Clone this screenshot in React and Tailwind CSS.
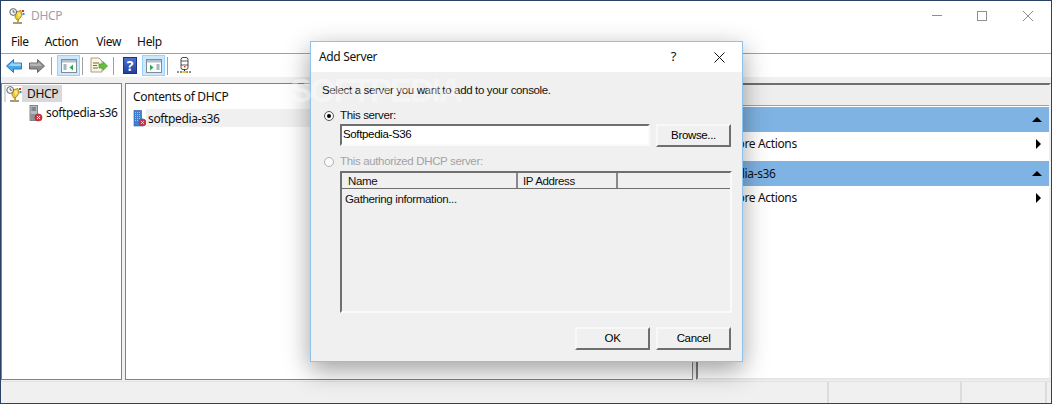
const ui = { fontFamily: '"Noto Sans", "Open Sans", sans-serif' };

const DhcpIcon = () => (
    <svg width="16" height="16" viewBox="0 0 16 16">
        <path d="M6 4l6-1.500 1 5-3 4H7.500L6 9z" fill="#efc72e" stroke="#8f6f10" strokeWidth="0.7" />
        <path d="M8 5l3-.7.500 3-2 2.500z" fill="#f9e680" />
        <circle cx="4.200" cy="4" r="3.400" fill="#f4f4f4" stroke="#555" strokeWidth="0.9" />
        <path d="M4.200 2v2.200h2" fill="none" stroke="#333" strokeWidth="0.7" />
        <rect x="13" y="2" width="2" height="2" fill="#d83a2a" />
        <rect x="13.500" y="5" width="2" height="2" fill="#3a8ad8" />
        <path d="M8.300 12h1.500v2H8.300z" fill="#a98a20" />
        <path d="M4 15h9" stroke="#6b5a20" strokeWidth="1.200" />
    </svg>
);

const ServerIcon = () => (
    <svg width="14" height="17" viewBox="0 0 14 17">
        <rect x="1" y="0.500" width="7.500" height="15" fill="#b8bcc2" stroke="#6a6f76" strokeWidth="0.8" />
        <path d="M2.500 3h4.500M2.500 5h4.500" stroke="#4d5258" strokeWidth="1" />
        <rect x="1.500" y="9" width="6.500" height="6" fill="#8e9298" />
        <circle cx="9.500" cy="12.500" r="3.600" fill="#d2333f" stroke="#8e1b25" strokeWidth="0.5" />
        <path d="M8 11l3 3M11 11l-3 3" stroke="#fff" strokeWidth="1" />
    </svg>
);

const ServerBlueIcon = () => (
    <svg className="-mr-[1px]" width="14" height="17" viewBox="0 0 14 17">
        <rect x="1" y="0.500" width="7.500" height="15.500" fill="#3f7fd0" stroke="#2c5ea8" strokeWidth="0.6" />
        <path d="M2 2.500h5.500M2 4.500h5.500M2 6.500h5.500M2 8.500h5.500M2 10.500h5.500" stroke="#a8c8ee" strokeWidth="0.9" strokeDasharray="1 1" />
        <circle cx="9.500" cy="12.500" r="3.600" fill="#c8324a" stroke="#3f5fb0" strokeWidth="0.8" />
        <path d="M8 11l3 3M11 11l-3 3" stroke="#e8d0e0" strokeWidth="0.9" />
    </svg>
);

const PaneIcon = ({ side }) => (
    <svg width="16" height="14" viewBox="0 0 16 14">
        <rect x="0.500" y="0.500" width="15" height="13" fill="#fbfdff" stroke="#7f8c96" />
        <rect x="1" y="1" width="14" height="2.500" fill="#b4c0ca" />
        {side === 'left' ? (
            <>
                <path d="M2.500 6h3M2.500 8h3M2.500 10h3" stroke="#5f6b75" strokeWidth="1" />
                <path d="M12 5.500v6L8.500 8.500z" fill="#2fae4a" />
            </>
        ) : (
            <>
                <path d="M10.500 6h3M10.500 8h3M10.500 10h3" stroke="#5f6b75" strokeWidth="1" />
                <path d="M4 5.500v6L7.500 8.500z" fill="#2fae4a" />
            </>
        )}
    </svg>
);

const ToolSep = ({ className = '' }) => <span className={`h-[18px] w-[1px] bg-[#a0a0a0] ${className}`} />;

const ActiveButton = ({ side, className = '' }) => (
    <span className={`flex h-[21px] w-[23px] items-center justify-center border border-[#99d1ff] bg-[#cce8ff] ${className}`}>
        <PaneIcon side={side} />
    </span>
);

const Toolbar = () => (
    <div className="flex h-[23px] items-center bg-white pl-[5px]">
        <svg width="16" height="14" viewBox="0 0 16 14">
            <path d="M7.500 0.500L0.500 7l7 6.500V10h8V4h-8z" fill="#4aa8e8" stroke="#1f6fb8" strokeWidth="0.9" />
            <path d="M7 3L2.500 7H15V4.500H7z" fill="#9ad6f8" />
        </svg>
        <svg className="ml-[7px]" width="16" height="14" viewBox="0 0 16 14">
            <path d="M8.500 0.500l7 6.500-7 6.500V10h-8V4h8z" fill="#8e8e8e" stroke="#5c5c5c" strokeWidth="0.9" />
            <path d="M1 4.500h8V3l4.500 4H1z" fill="#b4b4b4" />
        </svg>
        <ToolSep className="ml-[6px]" />
        <ActiveButton side="left" className="ml-[5px]" />
        <ToolSep className="ml-[2px]" />
        <svg className="ml-[7px]" width="18" height="17" viewBox="0 0 18 17">
            <path d="M1 1h8l3 3v11H1z" fill="#fbf6df" stroke="#9b9478" strokeWidth="0.9" />
            <path d="M3 6h6M3 8.500h4M3 11h5" stroke="#6b6b5a" strokeWidth="1" />
            <path d="M9 7h4V4.500L17.500 9 13 13.500V11H9z" fill="#63c13c" stroke="#3d8f22" strokeWidth="0.6" />
        </svg>
        <ToolSep className="ml-[5px]" />
        <span className="ml-[9px] flex h-[17px] w-[14px] items-center justify-center border border-[#1c2f8a] bg-gradient-to-b from-[#4f72cf] to-[#24409f] text-[14px] font-bold leading-none text-white">?</span>
        <ActiveButton side="right" className="ml-[5px]" />
        <ToolSep className="ml-[2px]" />
        <svg className="ml-[8px]" width="17" height="17" viewBox="0 0 17 17">
            <rect x="5" y="0.500" width="7" height="12" rx="2" fill="#fff" stroke="#333" strokeWidth="0.9" />
            <path d="M5 4h7M5 8h7" stroke="#333" strokeWidth="0.8" />
            <rect x="8" y="9" width="1.500" height="1.500" fill="#d83a2a" />
            <path d="M8.500 12.500v2M1 15h15" stroke="#222" strokeWidth="1" strokeDasharray="2 1" />
            <rect x="6.500" y="14" width="4" height="2" fill="#e8c420" />
        </svg>
    </div>
);

const ActionsHeader = ({ children }) => (
    <div className="flex h-[25px] items-center justify-between bg-[#7fb3e4] pl-[6px] pr-[7px]">
        <span>{children}</span>
        <span className="h-0 w-0 border-x-[5px] border-b-[5px] border-x-transparent border-b-black" />
    </div>
);

const ActionsRow = () => (
    <div className="mb-[6px] flex h-[23px] items-center justify-between pl-[29px] pr-[8px]">
        <span>More Actions</span>
        <span className="h-0 w-0 border-y-[5px] border-l-[5px] border-y-transparent border-l-black" />
    </div>
);

const Raised = ({ children }) => (
    <button className="flex h-[23px] w-[75px] items-center justify-center border-2 border-b-[#6f6f6f] border-l-[#f8f8f8] border-r-[#6f6f6f] border-t-[#f8f8f8] bg-[#f0f0f0] text-black">
        {children}
    </button>
);

const Radio = ({ checked, disabled }) => (
    <span className={`flex h-[10px] w-[10px] items-center justify-center rounded-full border ${disabled ? 'border-[#b0b0b0]' : 'border-[#555]'} bg-[#fafafa]`}>
        {checked && <span className="h-[4px] w-[4px] rounded-full bg-black" />}
    </span>
);

const AddServerDialog = () => (
    <div className="absolute left-[309px] top-[40px] flex h-[321px] w-[433px] flex-col border border-[#8ec1ec] bg-[#f0f0f0] shadow-[0_8px_24px_rgba(0,0,0,0.38)]">
        <div className="flex h-[30px] items-center bg-white pl-[8px] text-[#111]">
            <span>Add Server</span>
            <span className="ml-auto text-[13px]">?</span>
            <svg className="ml-[38px] mr-[17px]" width="11" height="11" viewBox="0 0 11 11">
                <path d="M0.500 0.500l10 10M10.500 0.500l-10 10" stroke="#111" strokeWidth="1" />
            </svg>
        </div>
        <div className="flex flex-1 flex-col px-[11px] text-[11.500px] tracking-[-0.35px] text-[#111]" style={{ fontFamily: '"Liberation Sans", Arial, sans-serif' }}>
            <p className="mt-[11px] h-[15px] leading-[15px]">Select a server you want to add to your console.</p>
            <div className="mt-[12px] flex h-[12px] items-center gap-[6px] pl-[2px]">
                <Radio checked />
                <span>This server:</span>
            </div>
            <div className="mt-[2px] flex gap-[6px] pl-[18px]">
                <div className="flex h-[22px] w-[310px] items-center border-2 border-b-[#fafafa] border-l-[#6f6f6f] border-r-[#fafafa] border-t-[#6f6f6f] bg-white pl-[1px] text-black">Softpedia-S36</div>
                <Raised>Browse...</Raised>
            </div>
            <div className="mt-[9px] flex h-[12px] items-center gap-[6px] pl-[2px] text-[#a3a3a3]">
                <Radio disabled />
                <span>This authorized DHCP server:</span>
            </div>
            <div className="ml-[18px] mt-[3px] flex h-[142px] w-[392px] flex-col border-2 border-b-[#fafafa] border-l-[#6f6f6f] border-r-[#fafafa] border-t-[#6f6f6f]">
                <div className="flex h-[16px] border-b border-[#6f6f6f]">
                    <span className="w-[176px] border-r-2 border-[#8a8a8a] pl-[6px] leading-[16px]">Name</span>
                    <span className="w-[100px] border-r-2 border-[#8a8a8a] pl-[5px] leading-[16px]">IP Address</span>
                </div>
                <span className="mt-[2px] pl-[3px] leading-[16px]">Gathering information...</span>
            </div>
            <div className="mt-[14px] flex justify-end gap-[6px]">
                <Raised>OK</Raised>
                <Raised>Cancel</Raised>
            </div>
        </div>
    </div>
);

const App = () => (
    <div className="relative flex h-[404px] w-[1052px] flex-col overflow-hidden border border-[#2b4266] bg-[#f0f0f0] text-[12px] tracking-[-0.35px] text-[#111]" style={ui}>
        <div className="flex h-[29px] items-center bg-white pl-[8px]">
            <DhcpIcon />
            <span className="ml-[6px] text-[#a0a0a8]">DHCP</span>
            <div className="ml-auto flex items-center">
                <span className="h-[1px] w-[10px] bg-[#8f8f8f]" />
                <span className="ml-[35px] h-[10px] w-[10px] border border-[#8f8f8f]" />
                <svg className="ml-[36px] mr-[18px]" width="10" height="10" viewBox="0 0 10 10">
                    <path d="M0 0l10 10M10 0L0 10" stroke="#8f8f8f" strokeWidth="1" />
                </svg>
            </div>
        </div>
        <div className="flex h-[24px] items-center border-b border-[#a0a0a8] bg-white pl-[10px]">
            <span>File</span>
            <span className="ml-[16px]">Action</span>
            <span className="ml-[18px]">View</span>
            <span className="ml-[16px]">Help</span>
        </div>
        <Toolbar />

        <div className="mt-[6px] flex h-[297px] gap-[3px]">
            <div className="flex w-[121px] flex-col border border-[#7e828a] bg-white pl-[2px] pt-[1px]">
                <div className="flex h-[17px] w-[58px] items-center bg-[#d9d9d9] pl-[2px]">
                    <span className="bg-white"><DhcpIcon /></span>
                    <span className="ml-[5px]">DHCP</span>
                </div>
                <div className="mt-[2px] flex items-center pl-[25px]">
                    <ServerIcon />
                    <span className="ml-[3px] whitespace-nowrap">softpedia-s36</span>
                </div>
            </div>
            <div className="flex w-[568px] flex-col border border-[#7e828a] bg-white pl-[7px] pt-[5px]">
                <span className="leading-[16px]">Contents of DHCP</span>
                <div className="mt-[4px] flex items-center">
                    <ServerBlueIcon />
                    <span className="h-[18px] flex-1 bg-[#f0f0f0] pl-[2px] leading-[20px]">softpedia-s36</span>
                </div>
            </div>
            <div className="flex flex-1 flex-col border-2 border-b-[#e6e6e6] border-l-[#7a7a7a] border-r-[#f0f0f0] border-t-[#6f6f6f] bg-white">
                <div className="h-[21px] border-b border-[#a0a0a0] bg-[#eeeeee]" />
                <div className="mt-[1px]">
                    <ActionsHeader>DHCP</ActionsHeader>
                    <ActionsRow />
                    <ActionsHeader>softpedia-s36</ActionsHeader>
                    <ActionsRow />
                </div>
            </div>
        </div>

        <div className="mt-[1px] flex flex-1 border-t border-[#e2e2e2]">
            <span className="w-[828px] border-r-2 border-[#dcdcdc]" />
            <span className="w-[133px] border-r-2 border-[#dcdcdc]" />
            <span className="w-[85px] border-r-2 border-[#dcdcdc]" />
        </div>

        <AddServerDialog />

        <span className="pointer-events-none absolute left-[289px] top-[73px] text-[33px] font-bold leading-none tracking-[-2px] text-white/40" style={{ fontFamily: '"Liberation Sans", sans-serif' }}>SOFTPEDIA</span>
    </div>
);

export default App;
